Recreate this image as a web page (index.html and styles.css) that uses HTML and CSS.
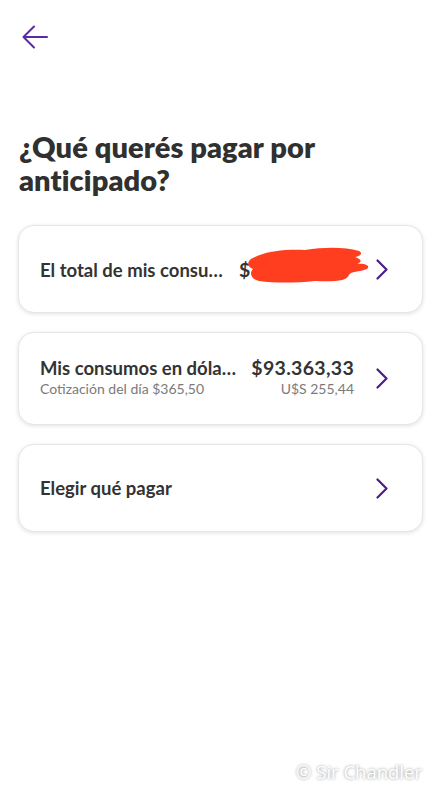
FILE: index.html
```html
<!DOCTYPE html>
<html lang="es">
<head>
  <meta charset="UTF-8" />
  <title>Pagar por anticipado</title>
  <link rel="stylesheet" href="styles.css">
</head>
<body>
  <header class="topbar">
    <button class="back" aria-label="Volver">
      <svg width="26" height="24" viewBox="0 0 26 24" fill="none" stroke="#5b2a9e" stroke-width="2" stroke-linecap="round" stroke-linejoin="round">
        <path d="M25 12H2M12 1.5L1.5 12 12 22.5"/>
      </svg>
    </button>
  </header>

  <h1>¿Qué querés pagar por anticipado?</h1>

  <div class="options">
    <a class="option" href="#">
      <div class="row">
        <span class="label">El total de mis consu…</span>
        <span class="amount hidden-amount">$1
          <svg class="scribble" width="126" height="40" viewBox="0 0 126 40">
            <path fill="#ff3d1f" d="M6 14 C20 6 40 4 60 5 C80 2 100 2 114 6 C118 8 116 11 110 12 C116 14 118 17 112 19 C120 18 126 21 122 24 C114 27 106 26 104 30 C102 36 90 37 70 36 C50 38 30 38 14 36 C6 34 4 28 8 24 C2 22 2 17 6 14 Z"/>
          </svg>
        </span>
      </div>
      <svg class="chevron" width="12" height="21" viewBox="0 0 12 21" fill="none" stroke="#4b1c8a" stroke-width="2.2" stroke-linecap="round" stroke-linejoin="round">
        <path d="M1.5 1.5L10.5 10.5 1.5 19.5"/>
      </svg>
    </a>

    <a class="option tall" href="#">
      <div class="rows">
        <div class="row">
          <span class="label">Mis consumos en dóla…</span>
          <span class="amount">$93.363,33</span>
        </div>
        <div class="row sub">
          <span>Cotización del día $365,50</span>
          <span>U$S 255,44</span>
        </div>
      </div>
      <svg class="chevron" width="12" height="21" viewBox="0 0 12 21" fill="none" stroke="#4b1c8a" stroke-width="2.2" stroke-linecap="round" stroke-linejoin="round">
        <path d="M1.5 1.5L10.5 10.5 1.5 19.5"/>
      </svg>
    </a>

    <a class="option" href="#">
      <div class="row">
        <span class="label">Elegir qué pagar</span>
      </div>
      <svg class="chevron" width="12" height="21" viewBox="0 0 12 21" fill="none" stroke="#4b1c8a" stroke-width="2.2" stroke-linecap="round" stroke-linejoin="round">
        <path d="M1.5 1.5L10.5 10.5 1.5 19.5"/>
      </svg>
    </a>
  </div>

  <div class="watermark">© Sir Chandler</div>
</body>
</html>
```

FILE: styles.css
```css
body {
  margin: 0;
  font-family: Lato, "Open Sans", sans-serif;
  background: #fff;
  color: #333;
  width: 441px;
  min-height: 800px;
  position: relative;
}

.topbar {
  padding: 25px 0 0 22px;
  height: 50px;
}

.back {
  background: none;
  border: 0;
  padding: 0;
  display: block;
}

h1 {
  margin: 55px 19px 0;
  font-size: 29px;
  line-height: 33px;
  font-weight: 800;
  color: #303030;
  letter-spacing: 0.1px;
}

.options {
  display: flex;
  flex-direction: column;
  gap: 19px;
  margin: 29px 18px 0 18px;
}

.option {
  display: flex;
  align-items: center;
  gap: 22px;
  height: 88px;
  box-sizing: border-box;
  padding: 0 34px 0 21px;
  border: 1px solid #e6e6e6;
  border-radius: 16px;
  box-shadow: 0 1px 4px rgba(0,0,0,0.12);
  text-decoration: none;
  color: inherit;
  background: #fff;
}

.option.tall {
  height: 93px;
}

.rows {
  flex: 1;
  display: flex;
  flex-direction: column;
  gap: 1px;
  margin-top: -4px;
}

.row {
  flex: 1;
  display: flex;
  justify-content: space-between;
  align-items: baseline;
}

.label {
  font-size: 18.5px;
  font-weight: 700;
  color: #333;
}

.amount {
  font-size: 19.5px;
  font-weight: 700;
  color: #333;
  letter-spacing: 0.3px;
}

.hidden-amount {
  position: relative;
  width: 115px;
}

.scribble {
  position: absolute;
  left: 6px;
  top: -13px;
}

.sub {
  font-size: 14px;
  color: #7a7a7a;
}

.chevron {
  flex: none;
}

.watermark {
  position: absolute;
  right: 19px;
  top: 759px;
  font-family: "Open Sans", sans-serif;
  font-size: 18.5px;
  color: #fff;
  text-shadow: 0 0 3px rgba(0,0,0,0.45);
}
```
